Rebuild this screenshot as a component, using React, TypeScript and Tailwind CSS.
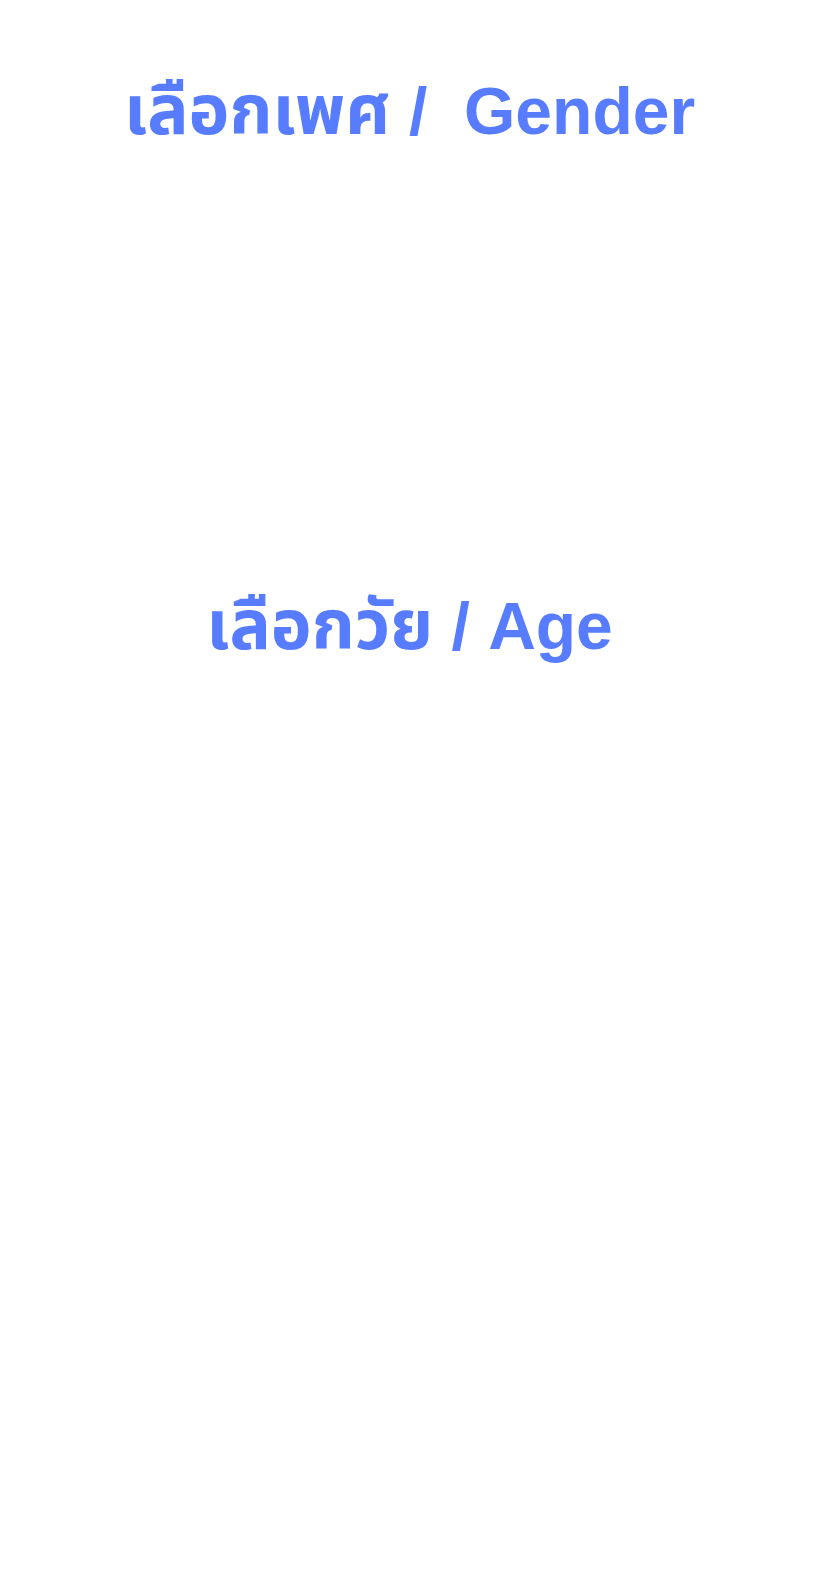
import React from "react";

const thai = { fontFamily: '"Noto Sans Thai", "Noto Sans Thai UI", sans-serif' };
const latin = { fontFamily: '"Liberation Sans", Arial, sans-serif' };

export default function App() {
  return (
    <div className="min-h-[1587px] w-full bg-white flex flex-col items-center pt-[79px]">
      <h1 className="h-[64px] leading-[64px] font-bold text-[#577cff] whitespace-pre">
        <span className="text-[69px]" style={thai}>เลือกเพศ</span>
        <span className="text-[66px]" style={latin}> /  Gender</span>
      </h1>
      <div className="h-[451px]" />
      <h1 className="h-[64px] leading-[64px] font-bold text-[#577cff] whitespace-pre">
        <span className="text-[69px]" style={thai}>เลือกวัย</span>
        <span className="text-[66px]" style={latin}> / Age</span>
      </h1>
    </div>
  );
}
